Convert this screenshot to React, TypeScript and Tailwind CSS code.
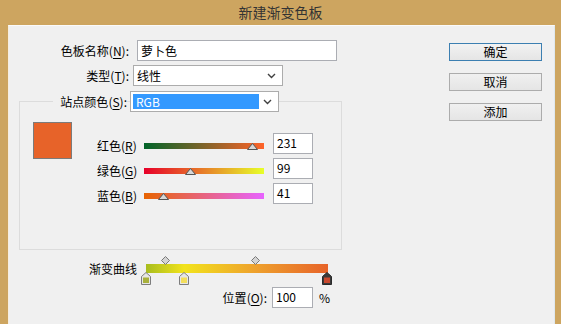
import React from "react";

const font = { fontFamily: '"Noto Sans CJK SC", "Noto Sans", sans-serif' };

function Chevron() {
  return (
    <svg width="9" height="6" viewBox="0 0 9 6" className="shrink-0">
      <path d="M1 1 L4.5 4.5 L8 1" fill="none" stroke="#404040" strokeWidth="1.4" />
    </svg>
  );
}

function Thumb({ pos }: { pos: number }) {
  return (
    <svg
      width="11"
      height="7"
      viewBox="0 0 11 7"
      className="absolute top-[0px]"
      style={{ left: pos - 5.5 }}
    >
      <polygon points="5.5,0.5 10.5,6.5 0.5,6.5" fill="#d6d6d6" stroke="#555" strokeWidth="1" />
    </svg>
  );
}

function Diamond({ pos }: { pos: number }) {
  return (
    <svg width="9" height="9" viewBox="0 0 9 9" className="absolute top-[-8px]" style={{ left: pos - 4.5 }}>
      <polygon points="4.5,0.5 8.5,4.5 4.5,8.5 0.5,4.5" fill="#d4d4d4" stroke="#7a7a7a" strokeWidth="1" />
    </svg>
  );
}

function Stop({ pos, color, selected }: { pos: number; color: string; selected?: boolean }) {
  return (
    <svg width="10" height="13" viewBox="0 0 10 13" className="absolute top-[8px]" style={{ left: pos - 5 }}>
      <polygon
        points="5,0.5 9.5,4.5 9.5,12.5 0.5,12.5 0.5,4.5"
        fill={selected ? "#3a3a3a" : "#e6e6e6"}
        stroke={selected ? "#2a2a2a" : "#7d7d7d"}
        strokeWidth="1"
      />
      <rect x="2" y="5.5" width="6" height="5.5" fill={color} />
    </svg>
  );
}

function Label({ text, k }: { text: string; k: string }) {
  return (
    <>
      {text}(<span className="underline underline-offset-2">{k}</span>)
    </>
  );
}

const sliders = [
  { name: "红色", k: "R", value: 231, grad: "linear-gradient(to right, rgb(0,99,41), rgb(255,99,41))" },
  { name: "绿色", k: "G", value: 99, grad: "linear-gradient(to right, rgb(231,0,41), rgb(231,255,41))" },
  { name: "蓝色", k: "B", value: 41, grad: "linear-gradient(to right, rgb(231,99,0), rgb(231,99,255))" },
];

export default function App() {
  return (
    <div className="w-[561px] h-[324px] bg-[#cda560] flex flex-col text-[12px] text-black overflow-hidden" style={font}>
      <div className="h-[25px] shrink-0 flex items-center justify-center pb-[1px] text-[14px] text-[#333]">
        新建渐变色板
      </div>
      <div className="flex-1 ml-[8px] mr-[6px] bg-[#f0f0f0] border-t border-l border-t-[#fafafa] border-l-[#f6eee0] border-r border-r-[#dfe8ee] flex">
        {/* left column */}
        <div className="w-[339px] flex flex-col">
          <div className="mt-[14px] h-[21px] flex items-center">
            <div className="w-[120px] text-right leading-[16px]">
              <Label text="色板名称" k="N" />:
            </div>
            <div className="ml-[8px] w-[200px] h-[21px] bg-white border border-[#abadb3] pl-[3px] leading-[19px]">
              萝卜色
            </div>
          </div>
          <div className="mt-[4px] h-[21px] flex items-center">
            <div className="w-[120px] text-right leading-[16px]">
              <Label text="类型" k="T" />:
            </div>
            <div className="ml-[4px] w-[150px] h-[21px] bg-white border border-[#acacac] pl-[3px] pr-[6px] flex items-center justify-between">
              <span className="leading-[16px]">线性</span>
              <Chevron />
            </div>
          </div>
          {/* group box */}
          <div className="mt-[15px] ml-[10px] w-[323px] h-[149px] border border-[#dcdcdc] flex flex-col">
            <div className="-mt-[11px] h-[21px] flex items-center">
              <div className="ml-[33px] w-[74px] text-right leading-[16px] bg-[#f0f0f0]">
                <Label text="站点颜色" k="S" />:
              </div>
              <div className="ml-[3px] w-[149px] h-[21px] bg-white border border-[#acacac] p-[2px] pr-[6px] flex items-center">
                <div className="w-[126px] h-full bg-[#3399ff] text-white pl-[3px] leading-[15px]">RGB</div>
                <div className="ml-auto">
                  <Chevron />
                </div>
              </div>
            </div>
            <div className="flex items-start">
              <div className="ml-[13px] mt-[10px] w-[39px] h-[37px] border border-[#7b7b7b] bg-[#e76329]" />
              <div className="ml-[25px] mt-[21px] flex flex-col gap-[4px]">
                {sliders.map((s) => (
                  <div key={s.k} className="h-[21px] flex items-start">
                    <div className="w-[47px] mt-[5px] leading-[16px]">
                      <Label text={s.name} k={s.k} />
                    </div>
                    <div className="relative w-[120px] h-[6px] mt-[10px]">
                      <div className="w-full h-full" style={{ background: s.grad }} />
                      <Thumb pos={(s.value / 255) * 120} />
                    </div>
                    <div className="ml-[9px] w-[40px] h-[21px] bg-white border border-[#abadb3] pl-[3px] pt-[1px] leading-[16px]">
                      {s.value}
                    </div>
                  </div>
                ))}
              </div>
            </div>
          </div>
          {/* gradient curve */}
          <div className="mt-[14px] h-[9px] flex items-center">
            <div className="ml-[80px] w-[57px] leading-[16px]">渐变曲线</div>
            <div
              className="relative w-[182px] h-[9px]"
              style={{
                background:
                  "linear-gradient(to right, #a8bd1e 0%, #f2e31c 21%, #eea12d 60%, #e76329 100%)",
              }}
            >
              <Diamond pos={19} />
              <Diamond pos={109} />
              <Stop pos={0} color="#a9b13c" />
              <Stop pos={38} color="#f3de5c" />
              <Stop pos={181} color="#c8482e" selected />
            </div>
          </div>
          <div className="mt-[14px] h-[21px] flex items-center">
            <div className="ml-[207px] w-[51px] text-right leading-[16px]">
              <Label text="位置" k="O" />:
            </div>
            <div className="ml-[5px] w-[41px] h-[21px] bg-white border border-[#abadb3] pl-[3px] pt-[1px] leading-[16px]">
              100
            </div>
            <div className="ml-[6px] leading-[16px]">%</div>
          </div>
        </div>
        {/* buttons */}
        <div className="ml-[101px] mt-[17px] flex flex-col gap-[12px]">
          <div className="w-[93px] h-[18px] border border-[#3c7fb1] bg-gradient-to-b from-[#f2f2f2] to-[#e5e5e5] flex items-center justify-center leading-[14px]">
            确定
          </div>
          <div className="w-[93px] h-[18px] border border-[#acacac] bg-gradient-to-b from-[#f0f0f0] to-[#e5e5e5] flex items-center justify-center leading-[14px]">
            取消
          </div>
          <div className="w-[93px] h-[18px] border border-[#acacac] bg-gradient-to-b from-[#f0f0f0] to-[#e5e5e5] flex items-center justify-center leading-[14px]">
            添加
          </div>
        </div>
      </div>
    </div>
  );
}
